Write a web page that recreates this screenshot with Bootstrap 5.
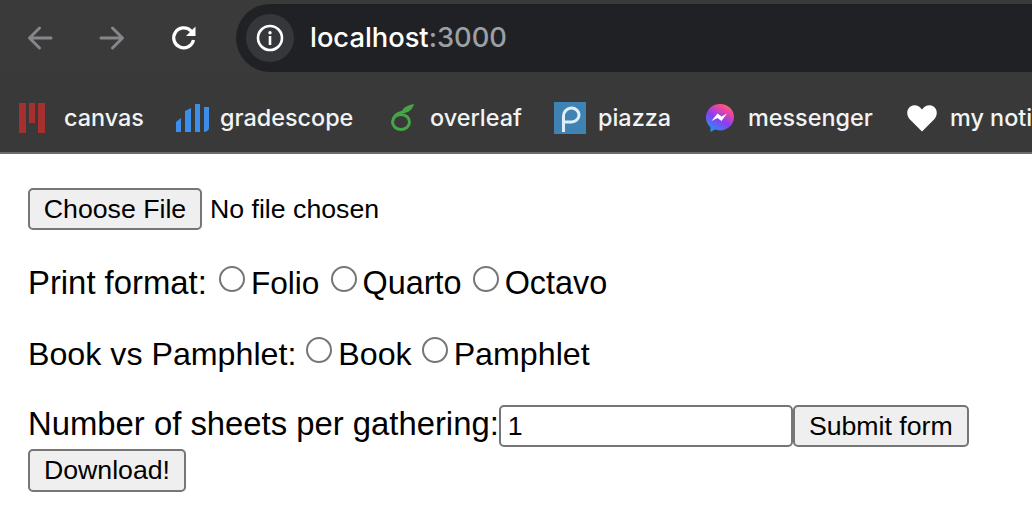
<!DOCTYPE html>
<html lang="en">
<head>
<meta charset="utf-8">
<title>localhost:3000</title>
<link href="https://cdn.jsdelivr.net/npm/bootstrap@5.3.0/dist/css/bootstrap.min.css" rel="stylesheet">
<style>
html,body{height:530px;overflow:hidden;background:#fff}
.browser-top{height:72px;background:#3a3a3b;padding-top:4px}
.nav-ico{width:72px;height:68px;flex:none}
.first-ico{margin-left:4px}
.omnibox{height:68px;background:#202124;border-radius:34px 0 0 34px;margin-left:16px;padding-left:10px;overflow:hidden}
.info-pill{width:48px;height:48px;border-radius:50%;background:#36373a}
.url-text{font:500 27.3px/1 Inter,"Liberation Sans",sans-serif;color:#fff;margin-left:16px}
.url-port{color:#9aa0a6}
.bookmarks{height:82px;background:#393939;border-bottom:2px solid #6a6b6d;padding-left:19px;padding-top:11px;overflow:hidden;white-space:nowrap}
.mark-item{font:500 23.4px/1 Inter,"Liberation Sans",sans-serif;color:#f1f3f4;flex:none}
.mark-item svg{flex:none;display:block}
.mark-canvas{width:157px}.mark-canvas svg{margin-right:19px}
.mark-grade{width:214px}.mark-grade svg{margin-right:11px}
.mark-over{width:164px}.mark-over svg{margin-right:16px}
.mark-piazza{width:151px}.mark-piazza svg{margin-right:12px}
.mark-msg{width:202px}.mark-msg svg{margin-right:13px}
.mark-notes svg{margin-right:13px}
.page-form{padding:34px 0 0 28px;font:32.85px/41px "Liberation Sans",Arial,sans-serif;color:#000}
.form-line{margin-bottom:30px}
.form-line.file-line{margin-bottom:32px;height:42px;line-height:42px}
.form-line.kind-line{font-size:32.2px}
.kind-line .radio-dot{margin-left:1px}
.fmt-label{font-size:32.4px}
.folio-label{font-size:31.6px}
.native-btn,.file-input::file-selector-button{font:26.7px/1 "Liberation Sans",Arial,sans-serif;height:42px;background:#efefef;border:2px solid #767676;border-radius:5px;color:#000;padding:0;vertical-align:top}
.file-input{font:26.7px/42px "Liberation Sans",Arial,sans-serif;height:42px;width:420px;display:block}
.file-input::file-selector-button{margin-right:8px;width:174px}
.radio-dot{appearance:none;-webkit-appearance:none;width:26px;height:26px;border:2px solid #767676;border-radius:50%;background:#fff;margin:0 6px 0 2px;vertical-align:2px}
.radio-first{margin-left:3px}
.sheets-input{width:294px;height:42px;font:26.7px "Liberation Sans",Arial,sans-serif;border:2px solid #767676;border-radius:5px;padding:0 7px;vertical-align:top;color:#000}
.sheets-line{line-height:38px}
.btn-submit{width:176px}
.btn-download{width:158px;display:block;margin-top:2px;height:43px}
</style>
</head>
<body class="m-0">
<header>
  <div class="browser-top d-flex align-items-stretch">
    <div class="nav-ico first-ico d-flex align-items-center justify-content-center">
      <svg width="26" height="26" viewBox="0 0 26 26" fill="none" stroke="#85878a" stroke-width="3" stroke-linecap="round" stroke-linejoin="round"><path d="M24 13H3M12.500 3 2.500 13 12.500 23"/></svg>
    </div>
    <div class="nav-ico d-flex align-items-center justify-content-center">
      <svg width="26" height="26" viewBox="0 0 26 26" fill="none" stroke="#85878a" stroke-width="3" stroke-linecap="round" stroke-linejoin="round"><path d="M2 13H23M13.500 3 23.500 13 13.500 23"/></svg>
    </div>
    <div class="nav-ico d-flex align-items-center justify-content-center">
      <svg width="28" height="28" viewBox="0 0 28 28" fill="none"><path d="M23.500 16a10 10 0 1 1-2.800-9.300L24 10" stroke="#fff" stroke-width="3.200"/><path d="M25.500 2.500V12H16z" fill="#fff"/></svg>
    </div>
    <div class="omnibox flex-grow-1 d-flex align-items-center">
      <div class="info-pill d-flex align-items-center justify-content-center">
        <svg width="28" height="28" viewBox="0 0 28 28" fill="none"><circle cx="14" cy="14" r="12" stroke="#fff" stroke-width="2.600"/><circle cx="14" cy="8.700" r="1.700" fill="#fff"/><rect x="12.700" y="12" width="2.600" height="9" fill="#fff"/></svg>
      </div>
      <span class="url-text">localhost<span class="url-port">:3000</span></span>
    </div>
  </div>
  <nav class="bookmarks d-flex align-items-center">
    <div class="mark-item mark-canvas d-flex align-items-center">
      <svg width="26" height="30" viewBox="0 0 26 30"><path fill="#a5302f" d="M0 0h7v30H0zM10 0h6v20h-6zM19 0h7v30h-7z"/></svg>canvas
    </div>
    <div class="mark-item mark-grade d-flex align-items-center">
      <svg width="33" height="28" viewBox="0 0 33 28"><path fill="#3d8ee8" d="M0 28V18l5-4v14zM9 28V7l6-3v24zM19 28V0h5v28zM28 28V3h5v21q0 3-5 4z"/></svg>gradescope
    </div>
    <div class="mark-item mark-over d-flex align-items-center">
      <svg width="24" height="27" viewBox="0 0 24 27" fill="none"><ellipse cx="11" cy="18" rx="8.500" ry="7.500" stroke="#47a447" stroke-width="3"/><path d="M3 17C3 12 7 9 12 8" stroke="#47a447" stroke-width="2.500"/><path d="M11 9C13 3 18 1 24 0c-1 5-6 10-13 9z" fill="#47a447"/></svg>overleaf
    </div>
    <div class="mark-item mark-piazza d-flex align-items-center">
      <svg width="32" height="32" viewBox="0 0 32 32"><rect width="32" height="32" fill="#3f83b4"/><path d="M9.500 30V14a8 8 0 0 1 8-8 7.500 7 0 0 1 0 14H11" fill="none" stroke="#dfeef8" stroke-width="3"/></svg>piazza
    </div>
    <div class="mark-item mark-msg d-flex align-items-center">
      <svg width="30" height="30" viewBox="0 0 30 30"><defs><linearGradient id="msg" x1="0.200" y1="1" x2="0.800" y2="0"><stop offset="0" stop-color="#1d9bf0"/><stop offset=".45" stop-color="#8a3df5"/><stop offset=".8" stop-color="#f0469c"/><stop offset="1" stop-color="#ff6d68"/></linearGradient></defs><path fill="url(#msg)" d="M15 1C7 1 1 7 1 14.500c0 4 1.700 7.400 4.500 9.700V29l4.400-2.400c1.600.5 3.300.8 5.100.8 8 0 14-6 14-13.400S23 1 15 1z"/><path fill="#fff" d="M6.500 18l6-7.500 4 3 5.500-3-5.500 7.500-4-3z"/></svg>messenger
    </div>
    <div class="mark-item mark-notes d-flex align-items-center">
      <svg width="30" height="28" viewBox="0 0 30 28"><path fill="#fff" d="M15 27.500 3 15.500C-1 11-.5 5 3.500 2.500 7.500 0 12 1.500 15 5.500c3-4 7.500-5.500 11.500-3 4 2.500 4.500 8.500.5 13z"/></svg>my notifications
    </div>
  </nav>
</header>
<main class="page-form">
  <form>
    <div class="form-line file-line"><input class="file-input" type="file" aria-label="File"></div>
    <div class="form-line">Print format: <input class="radio-dot radio-first" type="radio" name="fmt" id="f1" aria-label="Folio"><label class="folio-label" for="f1">Folio</label> <input class="radio-dot" type="radio" name="fmt" id="f2" aria-label="Quarto"><label class="fmt-label" for="f2">Quarto</label> <input class="radio-dot" type="radio" name="fmt" id="f3" aria-label="Octavo"><label class="fmt-label" for="f3">Octavo</label></div>
    <div class="form-line kind-line">Book vs Pamphlet: <input class="radio-dot" type="radio" name="kind" id="k1" aria-label="Book"><label for="k1">Book</label> <input class="radio-dot" type="radio" name="kind" id="k2" aria-label="Pamphlet"><label for="k2">Pamphlet</label></div>
    <div class="sheets-line"><label for="sheets">Number of sheets per gathering:</label><input class="sheets-input" id="sheets" type="text" value="1"><button class="native-btn btn-submit" type="button">Submit form</button><button class="native-btn btn-download" type="button">Download!</button></div>
  </form>
</main>
</body>
</html>
